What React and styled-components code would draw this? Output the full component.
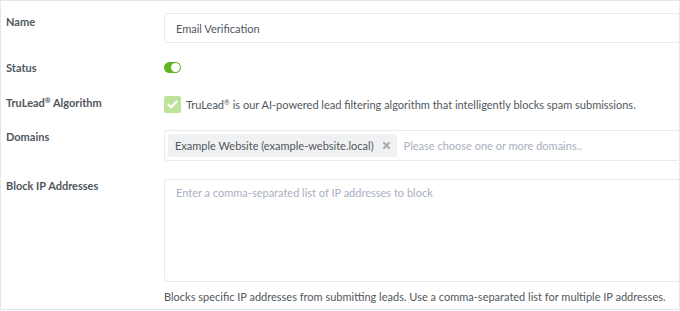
import React from 'react';
import styled, { createGlobalStyle } from 'styled-components';

const GlobalStyle = createGlobalStyle`
  html, body {
    margin: 0;
    padding: 0;
    background: #fff;
  }
  body {
    font-family: Lato, "Liberation Sans", Arial, sans-serif;
    -webkit-font-smoothing: antialiased;
  }
`;

const Panel = styled.div`
  box-sizing: border-box;
  width: 680px;
  height: 310px;
  border: 1px solid #e6e7e9;
  padding: 12px 1px 0 5px;
  overflow: hidden;
`;

const Row = styled.div`
  display: grid;
  grid-template-columns: 158px 1fr;
  align-items: start;
  margin-bottom: ${(p) => p.gap || 0}px;
`;

const Label = styled.div`
  font-size: 11px;
  font-weight: 700;
  color: #50575e;
  line-height: 14px;
  padding-top: ${(p) => p.offset || 0}px;
`;

const Field = styled.div`
  box-sizing: border-box;
  height: ${(p) => p.height}px;
  border: 1px solid #e9eaec;
  border-radius: 3px;
  background: #fff;
  display: flex;
  align-items: ${(p) => (p.top ? 'flex-start' : 'center')};
  padding: ${(p) => p.pad || '0 11px'};
  font-size: 11px;
  color: #50575e;
  margin-right: -2px;
`;

const Placeholder = styled.span`
  color: #a9b0bf;
  font-size: 11px;
`;

const Toggle = styled.div`
  position: relative;
  width: 17px;
  height: 11px;
  border-radius: 6px;
  background: #62b51f;
  margin-top: 1px;

  &::after {
    content: '';
    position: absolute;
    right: 1px;
    top: 1px;
    width: 9px;
    height: 9px;
    border-radius: 50%;
    background: #fff;
  }
`;

const CheckRow = styled.div`
  display: flex;
  align-items: center;
  gap: 5px;
  font-size: 11px;
  color: #50575e;
`;

const CheckBox = styled.div`
  width: 17px;
  height: 17px;
  border-radius: 2px;
  background: #bde39b;
  display: flex;
  align-items: center;
  justify-content: center;
`;

const Tag = styled.div`
  height: 23px;
  display: flex;
  align-items: center;
  gap: 9px;
  padding: 0 7px 0 7px;
  background: #f0f1f3;
  border-radius: 2px;
  color: #50575e;
  font-size: 11px;
  margin-right: 7px;
`;

const Help = styled.div`
  font-size: 11px;
  line-height: 14px;
  color: #50575e;
  margin-top: 8px;
`;

const Sup = styled.sup`
  font-size: 7px;
  vertical-align: 4px;
  line-height: 0;
`;

const Check = () => (
  <svg width="11" height="9" viewBox="0 0 11 9">
    <path d="M1.5 4.6 L4.2 7.2 L9.6 1.6" fill="none" stroke="#fff" strokeWidth="2.2" strokeLinecap="round" strokeLinejoin="round" />
  </svg>
);

const Cross = () => (
  <svg width="7" height="7" viewBox="0 0 7 7">
    <path d="M1 1 L6 6 M6 1 L1 6" stroke="#a8aaad" strokeWidth="2" strokeLinecap="round" />
  </svg>
);

export default function App() {
  return (
    <>
      <GlobalStyle />
      <Panel>
        <Row gap={18}>
          <Label offset={2}>Name</Label>
          <Field height={30}>Email Verification</Field>
        </Row>
        <Row gap={21}>
          <Label>Status</Label>
          <Toggle />
        </Row>
        <Row gap={17}>
          <Label>
            TruLead<Sup>®</Sup> Algorithm
          </Label>
          <CheckRow>
            <CheckBox>
              <Check />
            </CheckBox>
            <span>
              TruLead<Sup>®</Sup> is our AI-powered lead filtering algorithm that intelligently blocks spam submissions.
            </span>
          </CheckRow>
        </Row>
        <Row gap={18}>
          <Label>Domains</Label>
          <Field height={31} pad="0 3px">
            <Tag>
              Example Website (example-website.local)
              <Cross />
            </Tag>
            <Placeholder>Please choose one or more domains..</Placeholder>
          </Field>
        </Row>
        <Row>
          <Label>Block IP Addresses</Label>
          <div>
            <Field height={103} top pad="6px 11px">
              <Placeholder>Enter a comma-separated list of IP addresses to block</Placeholder>
            </Field>
            <Help>Blocks specific IP addresses from submitting leads. Use a comma-separated list for multiple IP addresses.</Help>
          </div>
        </Row>
      </Panel>
    </>
  );
}
